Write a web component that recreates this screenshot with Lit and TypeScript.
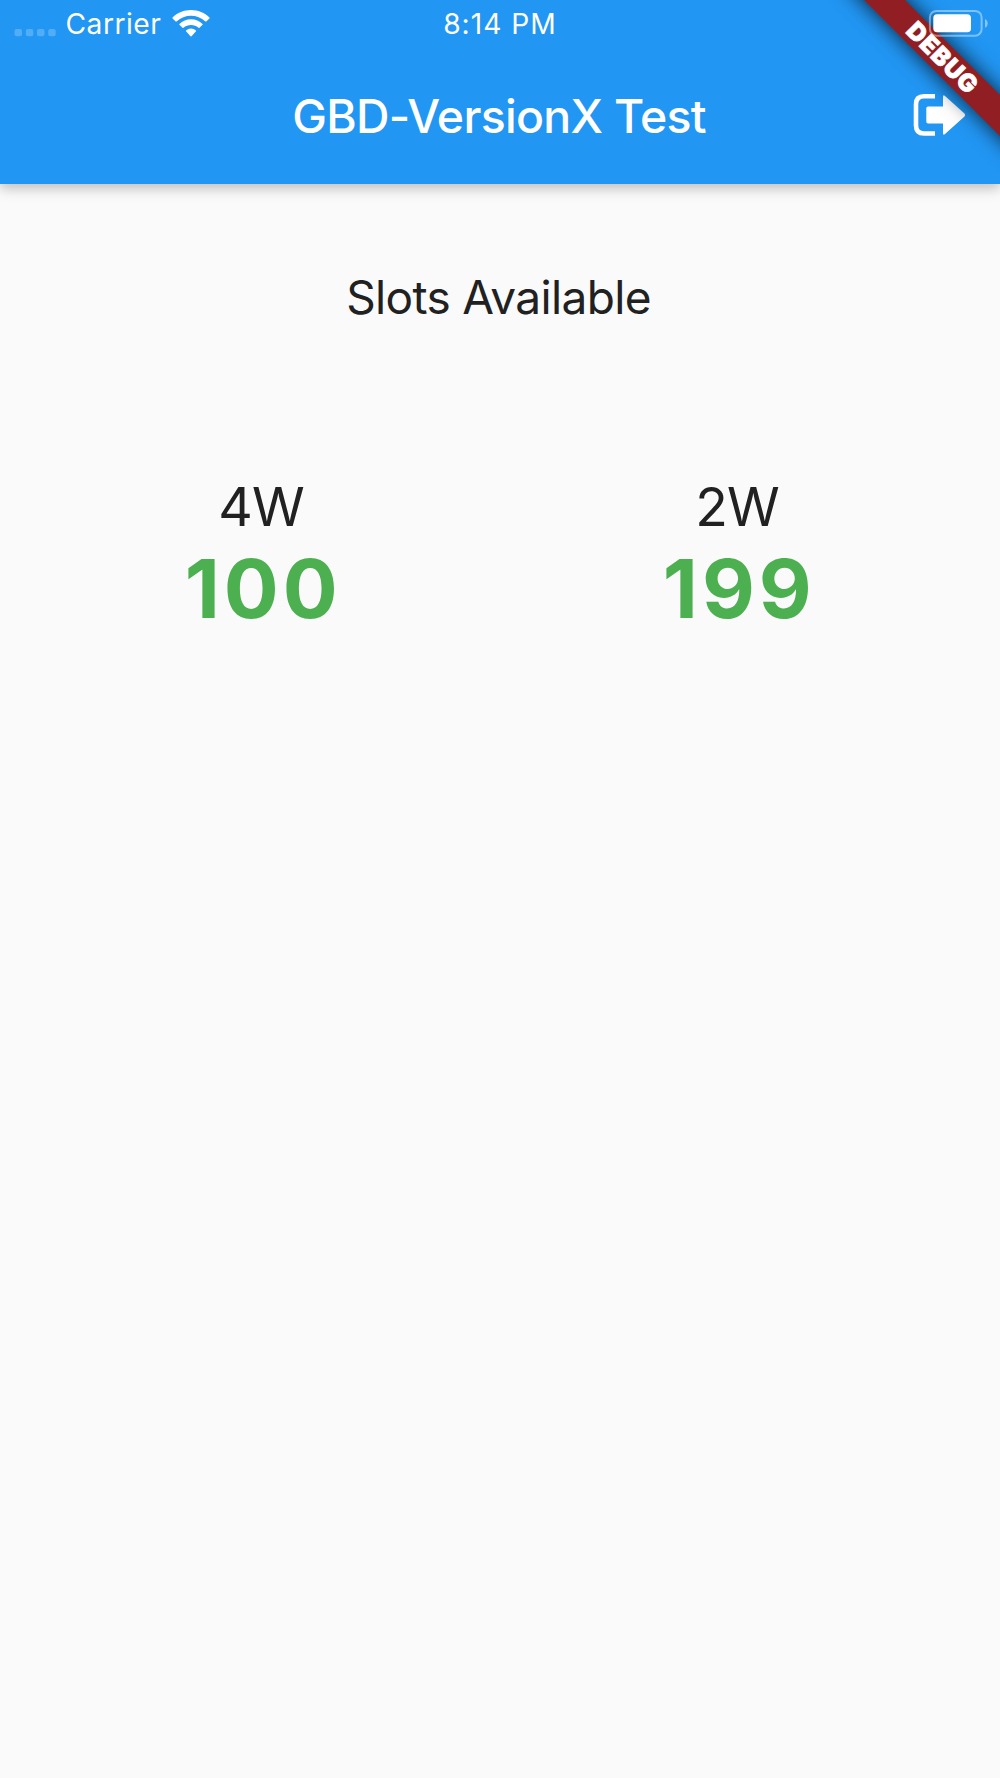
import { LitElement, html, css } from "lit";
import { customElement, property } from "lit/decorators.js";

@customElement("slot-count")
class SlotCount extends LitElement {
  @property() label = "";
  @property() count = "";

  static styles = css`
    :host {
      display: flex;
      flex-direction: column;
      align-items: center;
    }
    .label {
      font-size: 53.5px;
      line-height: 68px;
      letter-spacing: -1px;
      margin-right: 2px;
      color: #212121;
    }
    .count {
      font-size: 81.5px;
      line-height: 96px;
      font-weight: 700;
      letter-spacing: 4px;
      margin-right: -2.5px;
      color: #4caf50;
    }
  `;

  render() {
    return html`
      <div class="label">${this.label}</div>
      <div class="count">${this.count}</div>
    `;
  }
}

@customElement("app-root")
class AppRoot extends LitElement {
  static styles = css`
    :host {
      display: block;
      position: relative;
      height: 1778px;
      overflow: hidden;
      background: #fafafa;
      font-family: Inter, "Liberation Sans", sans-serif;
    }
    .header {
      height: 183.6px;
      background: #2196f3;
      box-shadow: 0 4px 10px rgba(0, 0, 0, 0.14), 0 6px 14px rgba(0, 0, 0, 0.1);
      color: #fff;
    }
    .status {
      display: grid;
      grid-template-columns: 1fr auto 1fr;
      align-items: center;
      height: 48px;
      font-size: 28.2px;
      line-height: 48px;
      letter-spacing: 0.5px;
    }
    .time {
      letter-spacing: 1px;
    }
    .network {
      display: flex;
      align-items: center;
      padding-left: 14px;
    }
    .dots {
      width: 43px;
      height: 48px;
      margin-right: 8.5px;
    }
    .wifi {
      width: 38px;
      height: 48px;
      margin-left: 10.5px;
    }
    .bar {
      display: grid;
      grid-template-columns: 1fr auto 1fr;
      align-items: center;
      height: 136px;
    }
    .title {
      grid-column: 2;
      margin: 0 2px 0 0;
      font-size: 46.4px;
      line-height: 136px;
      font-weight: 500;
      letter-spacing: -0.7px;
    }
    .logout {
      justify-self: end;
      width: 54px;
      height: 44px;
      margin: 0 33px 2px 0;
    }
    .ribbon {
      position: absolute;
      top: 0;
      right: 0;
      width: 200px;
      height: 200px;
      overflow: hidden;
    }
    .band {
      position: absolute;
      left: 22px;
      top: 43px;
      width: 240px;
      height: 29px;
      transform: rotate(45deg);
      background: #901e23;
      box-shadow: 0 0 21px rgba(0, 0, 0, 0.8);
      color: #fff;
      font-size: 24.5px;
      line-height: 29px;
      font-weight: 900;
      letter-spacing: 0.9px;
      text-indent: 1.5px;
      -webkit-text-stroke: 0.7px #fff;
      text-align: center;
    }
    .battery {
      position: absolute;
      top: 8px;
      right: 10.5px;
      width: 62px;
      height: 30px;
    }
    .heading {
      margin: 79.400px 0 0;
      padding-right: 3px;
      font-size: 46px;
      line-height: 68px;
      font-weight: 400;
      letter-spacing: -0.65px;
      text-align: center;
      color: #212121;
    }
    .counts {
      display: grid;
      grid-template-columns: 1fr 1fr;
      padding: 141.600px 24px 0;
    }
  `;

  render() {
    return html`
      <header class="header">
        <div class="status">
          <div class="network">
            <svg class="dots" viewBox="14 0 43 48" fill="#fff" fill-opacity=".22">
              <rect x="14.5" y="29" width="7.5" height="7.2" rx="2" />
              <rect x="25.8" y="29" width="7.5" height="7.2" rx="2" />
              <rect x="37" y="29" width="7.5" height="7.2" rx="2" />
              <rect x="48.2" y="29" width="7.5" height="7.2" rx="2" />
            </svg>
            <span>Carrier</span>
            <svg class="wifi" viewBox="172 0 38 48" fill="#fff">
              <path d="M191 10C184 10 177.300 12.700 172.500 17.500Q172.200 18 172.600 18.400L175.700 21.400Q176.200 21.800 176.600 21.400C184.700 13.900 197.300 13.900 205.400 21.400Q205.800 21.800 206.300 21.400L209.400 18.400Q209.800 18 209.500 17.500C204.700 12.700 198 10 191 10Z" />
              <path d="M191 19.200C186.600 19.200 182.500 20.900 179.400 23.900Q179 24.400 179.400 24.800L182.500 27.800Q183 28.200 183.400 27.800C187.700 24.100 194.300 24.100 198.600 27.800Q199 28.200 199.500 27.800L202.600 24.800Q203 24.400 202.600 23.900C199.500 20.900 195.400 19.200 191 19.200Z" />
              <path d="M191 28.500Q188.200 28.500 186 30.400Q185.600 30.900 186 31.300L190.500 36.300Q191 36.800 191.500 36.300L196 31.300Q196.400 30.900 196 30.400Q193.800 28.500 191 28.500Z" />
            </svg>
          </div>
          <div class="time">8:14 PM</div>
        </div>
        <div class="bar">
          <h1 class="title">GBD-VersionX Test</h1>
          <svg class="logout" viewBox="913 93 54 44">
            <path d="M935 96.200H924Q916 96.200 916 104.200V125.500Q916 133.500 924 133.500H935" fill="none" stroke="#fff" stroke-width="4.600" />
            <path d="M928 106.500H943V97Q943 94.300 945 96L964.500 113.500Q966 115 964.500 116.500L945 134Q943 135.700 943 133V123.500H928Q926.300 123.500 926.300 121.800V108.200Q926.300 106.500 928 106.500Z" fill="#fff" />
          </svg>
        </div>
      </header>
      <main>
        <h2 class="heading">Slots Available</h2>
        <div class="counts">
          <slot-count label="4W" count="100"></slot-count>
          <slot-count label="2W" count="199"></slot-count>
        </div>
      </main>
      <div class="ribbon"><div class="band">DEBUG</div></div>
      <svg class="battery" viewBox="928 8 62 30">
        <rect x="929.900" y="10.900" width="51.700" height="24.800" rx="6.500" fill="none" stroke="#fff" stroke-opacity=".42" stroke-width="2" />
        <rect x="933.300" y="14.300" width="37.700" height="18" rx="3.800" fill="#fff" />
        <path d="M985 19C988.600 20.500 988.600 26.300 985 27.800Z" fill="#fff" fill-opacity=".45" />
      </svg>
    `;
  }
}
